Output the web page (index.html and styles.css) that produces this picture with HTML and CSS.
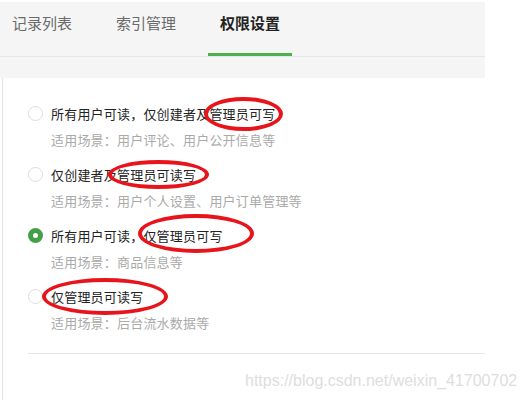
FILE: index.html
```html
<!DOCTYPE html>
<html lang="zh-CN">
<head>
    <meta charset="UTF-8">
    <meta name="viewport" content="width=device-width, initial-scale=1.0">
    <title>权限设置</title>
    <link rel="stylesheet" href="styles.css">
</head>
<body>
    <div class="page">
        <div class="tab-area">
            <div class="tabs">
                <div class="tab">记录列表</div>
                <div class="tab">索引管理</div>
                <div class="tab active">权限设置</div>
            </div>
        </div>
        <div class="card">
            <div class="option">
                <span class="radio"></span>
                <div class="option-text">
                    <div class="label">所有用户可读，仅创建者及管理员可写</div>
                    <div class="desc">适用场景：用户评论、用户公开信息等</div>
                </div>
            </div>
            <div class="option">
                <span class="radio"></span>
                <div class="option-text">
                    <div class="label">仅创建者及管理员可读写</div>
                    <div class="desc">适用场景：用户个人设置、用户订单管理等</div>
                </div>
            </div>
            <div class="option">
                <span class="radio checked"></span>
                <div class="option-text">
                    <div class="label">所有用户可读，仅管理员可写</div>
                    <div class="desc">适用场景：商品信息等</div>
                </div>
            </div>
            <div class="option">
                <span class="radio"></span>
                <div class="option-text">
                    <div class="label">仅管理员可读写</div>
                    <div class="desc">适用场景：后台流水数据等</div>
                </div>
            </div>
            <div class="divider"></div>
        </div>

        <!-- 红圈标注 -->
        <span class="mark mark-1"></span>
        <span class="mark mark-2"></span>
        <span class="mark mark-3"></span>
        <span class="mark mark-4"></span>
    </div>
    <div class="watermark">https://blog.csdn.net/weixin_41700702</div>
</body>
</html>
```

FILE: styles.css
```css
body {
    margin: 0;
    background: #fff;
    font-family: "Microsoft YaHei", "Noto Sans CJK SC", sans-serif;
    height: 400px;
    position: relative;
    overflow: hidden;
}
.page {
    width: 485px;
    padding-top: 2px;
    position: relative;
}
.tab-area {
    background: #f5f5f5;
    padding-bottom: 21px;
}
.tabs {
    display: flex;
    gap: 20px;
    height: 54px;
    border-bottom: 1px solid #e6e6e6;
}
.tab {
    padding: 0 12px;
    font-size: 15px;
    line-height: 20px;
    padding-top: 11px;
    color: #6a6a6a;
    box-sizing: border-box;
    height: 54px;
}
.tab.active {
    color: #222;
    font-weight: bold;
    border-bottom: 3px solid #4caf50;
}
.card {
    margin-left: 2px;
    border-left: 1px solid #e4e4e4;
    background: #fff;
    padding: 26px 0 0 25px;
    height: 330px;
    box-sizing: border-box;
}
.option {
    display: flex;
    gap: 8px;
    margin-bottom: 15px;
}
.radio {
    width: 15px;
    height: 15px;
    box-sizing: border-box;
    border: 1px solid #dcdcdc;
    border-radius: 50%;
    margin-top: 2px;
    flex-shrink: 0;
}
.radio.checked {
    border: 5px solid #43a047;
    background: #fff;
}
.label {
    font-size: 13px;
    line-height: 20px;
    letter-spacing: 0.2px;
    color: #222;
}
.desc {
    font-size: 13px;
    line-height: 20px;
    letter-spacing: 0.2px;
    color: #aaa;
    margin-top: 6px;
}
.divider {
    height: 1px;
    background: #e6e6e6;
    margin-top: 20px;
}
.mark {
    position: absolute;
    border: 4px solid #e8141b;
    border-radius: 50%;
    box-sizing: border-box;
}
.mark-1 { left: 204px; top: 97px; width: 79px; height: 34px; }
.mark-2 { left: 108px; top: 160px; width: 101px; height: 29px; }
.mark-3 { left: 138px; top: 214px; width: 116px; height: 39px; }
.mark-4 { left: 42px; top: 278px; width: 126px; height: 37px; }
.watermark {
    position: absolute;
    left: 245px;
    top: 372px;
    font-family: "Liberation Sans", Arial, sans-serif;
    font-size: 16px;
    color: #dedede;
}
```
